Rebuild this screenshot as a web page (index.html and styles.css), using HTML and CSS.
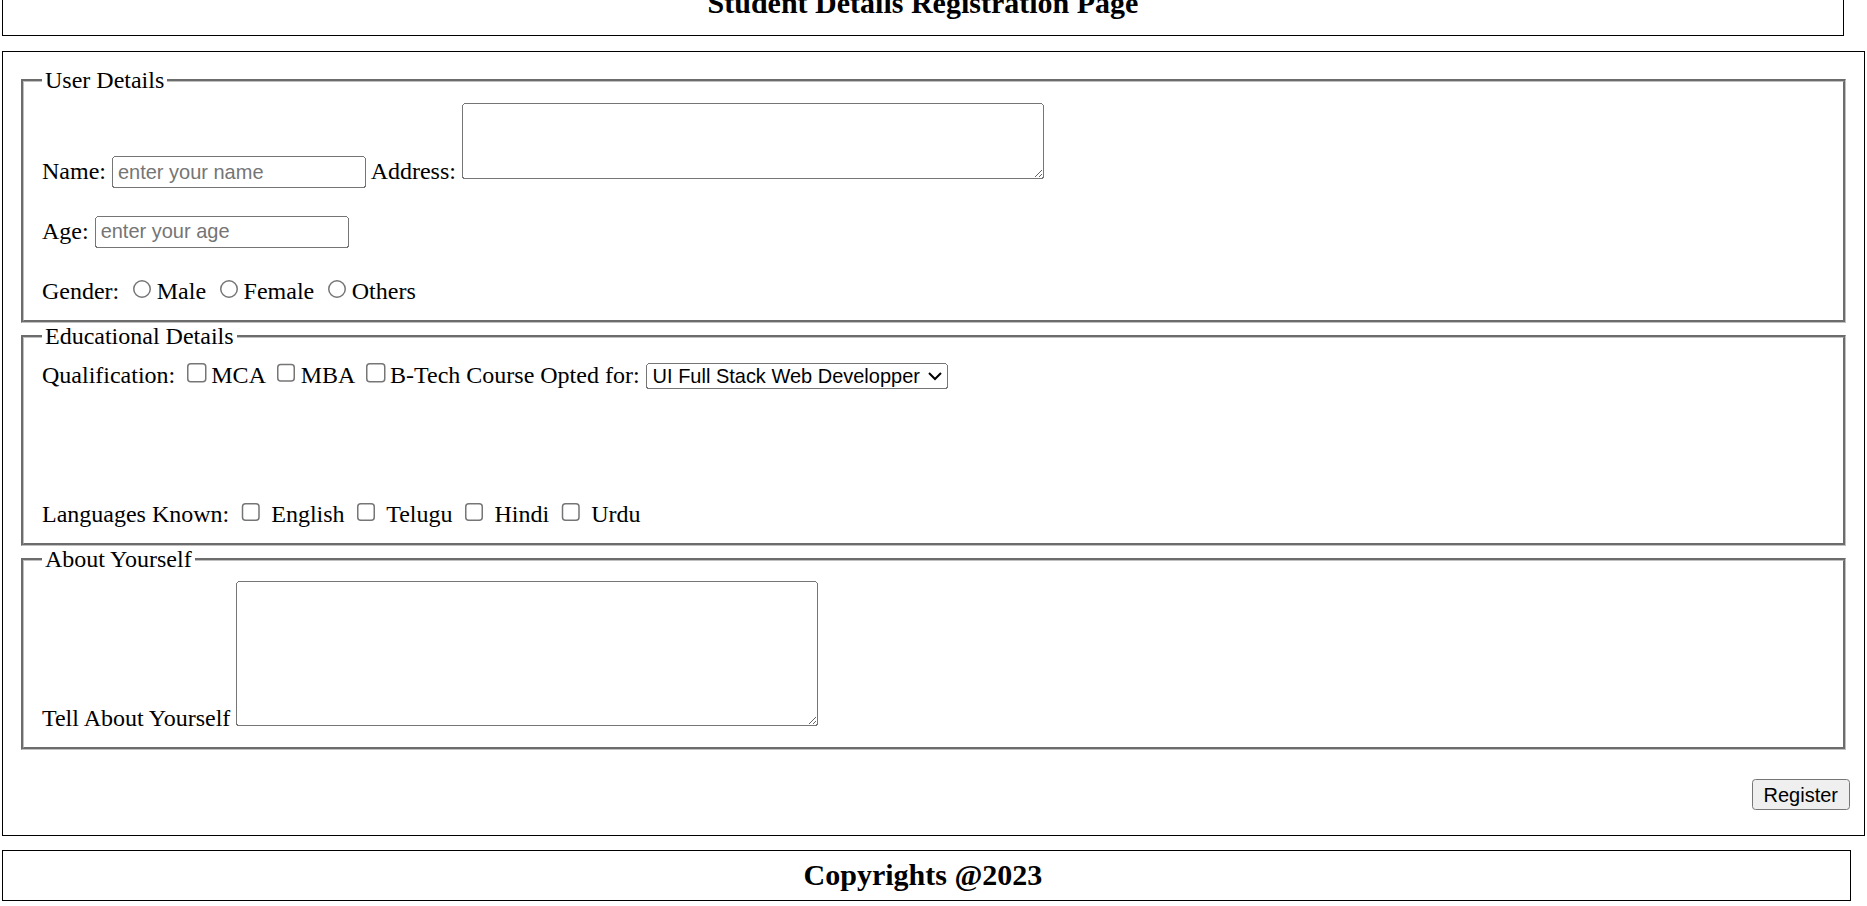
FILE: index.html
```html
<!DOCTYPE html>
<html lang="en">
<head>
<meta charset="utf-8">
<title>Student Details Registration Page</title>
<link rel="stylesheet" href="styles.css">
</head>
<body>
<div class="page">
  <header class="top">
    <h3 class="title">Student Details Registration Page</h3>
  </header>
  <form class="card">
    <fieldset class="group">
      <legend class="group-title">User Details</legend>
      <div class="line">Name: <input class="field text" type="text" placeholder="enter your name"> Address: <textarea class="field area"></textarea></div>
      <div class="line gap">Age: <input class="field text" type="text" placeholder="enter your age"></div>
      <div class="line gap">Gender: <input type="radio" name="gender">Male <input type="radio" name="gender">Female <input type="radio" name="gender">Others</div>
    </fieldset>
    <fieldset class="group">
      <legend class="group-title">Educational Details</legend>
      <div class="line">Qualification: <input type="checkbox">MCA <input type="checkbox">MBA <input type="checkbox">B-Tech Course Opted for: <select class="field course"><option>UI Full Stack Web Developper</option></select></div>
      <div class="line langs">Languages Known: <input type="checkbox"> English <input type="checkbox"> Telugu <input type="checkbox"> Hindi <input type="checkbox"> Urdu</div>
    </fieldset>
    <fieldset class="group">
      <legend class="group-title">About Yourself</legend>
      <div class="line">Tell About Yourself <textarea class="field area about-area"></textarea></div>
    </fieldset>
    <div class="actions">
      <button class="field btn" type="button">Register</button>
    </div>
  </form>
  <footer class="foot">
    <h3 class="title">Copyrights @2023</h3>
  </footer>
</div>
</body>
</html>
```
FILE: styles.css
```css
body {
  margin: 0;
  background: #fff;
  color: #000;
  font-family: "Liberation Serif", "Times New Roman", serif;
}

.page {
  zoom: 1.5;
  font-size: 16px;
}

.top {
  width: 1228px;
  margin: -19.9px 0 10px 1.33px;
  border: 1px solid #000;
  padding: 10px;
  box-sizing: border-box;
  text-align: center;
}

.title {
  margin: 0;
  font-size: 20px;
  font-weight: bold;
}

.card {
  width: 1242px;
  margin: 0 0 9px 1.33px;
  border: 1px solid #000;
  padding: 10px;
  box-sizing: border-box;
}

.group {
  margin: 0 2px;
  padding: 0.35em 0.75em 0.625em;
  border: 2px groove rgb(192, 192, 192);
}

.group-title {
  padding: 0 2px;
}

.gap {
  margin-top: 18.38px;
}

.langs {
  margin-top: 73px;
}

.field {
  font-family: "Liberation Sans", Arial, sans-serif;
  font-size: 13.3333px;
}

.text {
  width: 169.33px;
  box-sizing: border-box;
}

.course {
  width: 201.5px;
}

.area {
  width: 388px;
  height: 50.67px;
  box-sizing: border-box;
}

.about-area {
  height: 96.67px;
}

.actions {
  display: flex;
  justify-content: flex-end;
  margin-right: -0.67px;
  padding: 19.33px 0 6.67px 0;
}

.btn {
  height: 20.67px;
}

.foot {
  width: 1233px;
  margin: 0 0 0 1.33px;
  border: 1px solid #000;
  padding: 5px 10px 5px 5px;
  box-sizing: border-box;
  text-align: center;
}
```
